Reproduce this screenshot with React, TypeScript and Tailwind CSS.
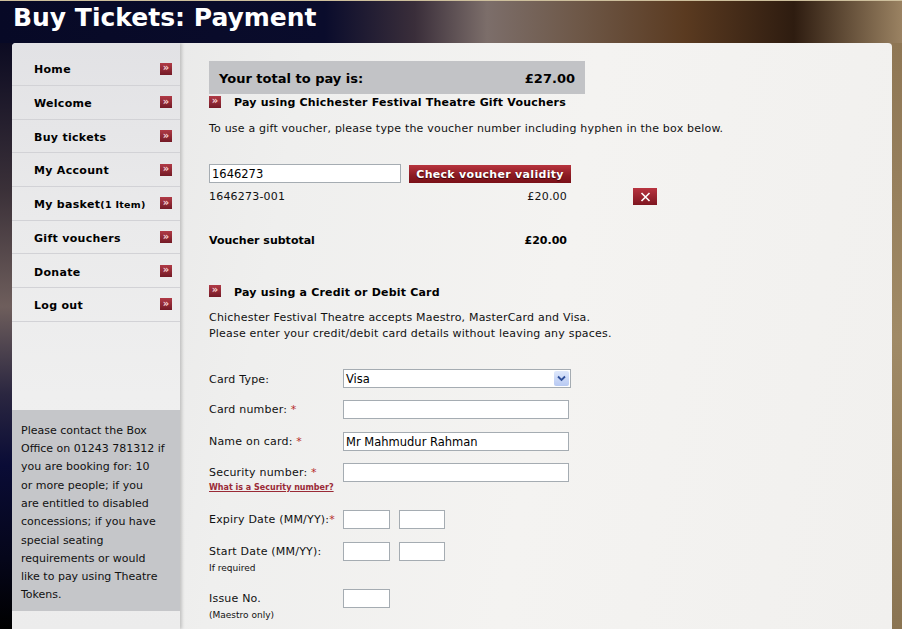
import React from "react";

const font = "font-['DejaVu_Sans',Verdana,sans-serif]";

function RedIcon() {
  return (
    <span className="flex h-[12px] w-[12px] shrink-0 items-center justify-center bg-[linear-gradient(#b03a46,#741a26)] pb-[1px] text-[10px] font-bold leading-none text-[#f6d2d4]">
      »
    </span>
  );
}

const navItems: { label: string; extra?: string }[] = [
  { label: "Home" },
  { label: "Welcome" },
  { label: "Buy tickets" },
  { label: "My Account" },
  { label: "My basket", extra: "(1 Item)" },
  { label: "Gift vouchers" },
  { label: "Donate" },
  { label: "Log out" },
];

const infoLines = [
  "Please contact the Box",
  "Office on 01243 781312 if",
  "you are booking for: 10",
  "or more people; if you",
  "are entitled to disabled",
  "concessions; if you have",
  "special seating",
  "requirements or would",
  "like to pay using Theatre",
  "Tokens.",
];

function TextInput({ w, value }: { w: string; value?: string }) {
  return (
    <div
      className={`${w} flex h-[19px] items-center border border-[#a5acb2] bg-white pl-[2px] pt-[3px] text-[11.5px] tracking-normal text-black`}
    >
      {value}
    </div>
  );
}

function Star() {
  return <span className="text-[#b52a2a]">*</span>;
}

export default function App() {
  return (
    <div
      className={`${font} flex h-[629px] w-[902px] flex-col overflow-hidden bg-[linear-gradient(90deg,#070926_0%,#0a0c2c_36%,#3a2e3a_46%,#7c6e6a_54%,#6e5848_64%,#5a3a20_76%,#2e1c10_88%,#9a8262_100%)]`}
    >
      {/* Header */}
      <div className="h-[43px] shrink-0 border-t border-[#cdbf9c] pl-[13px]">
        <h1 className="text-[25px] font-bold leading-[33px] text-white">Buy Tickets: Payment</h1>
      </div>

      <div className="flex min-h-0 flex-1">
        {/* left gutter */}
        <div className="w-[12px] shrink-0 bg-[linear-gradient(180deg,#0c0b22_0%,#3a3038_25%,#6e5e5c_45%,#2a2640_60%,#0a0c36_72%,#05061a_88%,#000000_100%)]" />

        {/* Panel */}
        <div className="flex w-[880px] shrink-0 overflow-hidden rounded-t-[4px] bg-[linear-gradient(100deg,#e4e4e4_0%,#efefee_30%,#f4f3f1_60%,#f1f0ee_100%)]">
          {/* Sidebar */}
          <div className="relative z-10 flex w-[168px] shrink-0 flex-col bg-[linear-gradient(180deg,#e2e2e5_0%,#eaeaeb_30%,#efefef_60%,#ececec_100%)] shadow-[2px_0_3px_rgba(0,0,0,0.18)]">
            <nav className="pt-[9.3px]">
              {navItems.map((item) => (
                <div
                  key={item.label}
                  className="flex h-[33.7px] items-center justify-between border-b border-[#d2d2d6] pl-[22px] pr-[8px] pt-[4px]"
                >
                  <span className="text-[11px] font-bold tracking-[0.3px] text-black">
                    {item.label}
                    {item.extra && <span className="text-[9.5px] tracking-[0.3px]">{item.extra}</span>}
                  </span>
                  <span className="-mt-[4px]">
                    <RedIcon />
                  </span>
                </div>
              ))}
            </nav>
            <div className="mt-[88px] h-[201px] bg-[#c5c6c9] pl-[9px] pt-[12px] text-[11px] leading-[18.3px] text-[#111]">
              {infoLines.map((l) => (
                <div key={l}>{l}</div>
              ))}
            </div>
          </div>

          {/* Main */}
          <div className="flex flex-1 flex-col pl-[29px] text-[11px] tracking-[0.2px] text-[#111]">
            {/* Total */}
            <div className="mt-[18px] flex h-[34px] w-[376px] items-center justify-between bg-[#c2c3c6] pl-[10px] pr-[10px] pt-[2px] text-[13px] font-bold tracking-normal text-black">
              <span>Your total to pay is:</span>
              <span>£27.00</span>
            </div>

            {/* voucher heading */}
            <div className="mt-[2px] flex h-[14px] items-center gap-[13px]">
              <span className="-mt-[3px]">
                <RedIcon />
              </span>
              <span className="text-[11px] font-bold text-black">
                Pay using Chichester Festival Theatre Gift Vouchers
              </span>
            </div>

            <p className="mt-[11px] leading-[16px]">
              To use a gift voucher, please type the voucher number including hyphen in the box below.
            </p>

            <div className="mt-[27px] flex items-center gap-[8px]">
              <TextInput w="w-[192px]" value="1646273" />
              <button className="flex h-[18px] w-[162px] items-center justify-center bg-[linear-gradient(#b8343e,#8a1a22_60%,#7a1018)] pt-[3px] text-[11px] font-bold tracking-[0.3px] text-white [text-shadow:0_1px_1px_#3a0006]">
                Check voucher validity
              </button>
            </div>

            <div className="mt-[5px] flex items-start">
              <div className="mt-[1px] flex w-[358px] justify-between leading-[16px]">
                <span>1646273-001</span>
                <span>£20.00</span>
              </div>
              <button className="ml-[66px] flex h-[17px] w-[24px] items-center justify-center bg-[linear-gradient(#b83440,#7e1620)]">
                <svg width="11" height="10" viewBox="0 0 11 10">
                  <path d="M1.5 1 L9.5 9 M9.5 1 L1.5 9" stroke="#fff" strokeWidth="1.6" />
                </svg>
              </button>
            </div>

            <div className="mt-[28px] flex w-[358px] justify-between font-bold leading-[16px] tracking-normal text-black">
              <span>Voucher subtotal</span>
              <span>£20.00</span>
            </div>

            {/* Card heading */}
            <div className="mt-[37px] flex h-[14px] items-center gap-[13px]">
              <span className="-mt-[5px]">
                <RedIcon />
              </span>
              <span className="text-[11px] font-bold text-black">Pay using a Credit or Debit Card</span>
            </div>

            <p className="mt-[10px] leading-[16px]">
              Chichester Festival Theatre accepts Maestro, MasterCard and Visa.
              <br />
              Please enter your credit/debit card details without leaving any spaces.
            </p>

            {/* Form */}
            <div className="mt-[27px] flex flex-col">
              <div className="flex h-[31px]">
                <div className="w-[134px] pt-[2px] leading-[18px]">Card Type:</div>
                <div className="flex h-[19px] w-[228px] items-center justify-between border border-[#a5acb2] bg-white pl-[2px] pr-[1px] text-[11.5px] tracking-normal text-black">
                  <span className="pt-[3px]">Visa</span>
                  <span className="flex h-[15px] w-[15px] items-center justify-center rounded-[2px] bg-[linear-gradient(#dfe8fb,#b7c9f3)]">
                    <svg width="9" height="7" viewBox="0 0 9 7">
                      <path d="M1 1.5 L4.5 5 L8 1.5" fill="none" stroke="#30509a" strokeWidth="1.8" />
                    </svg>
                  </span>
                </div>
              </div>
              <div className="flex h-[32px]">
                <div className="w-[134px] pt-[1px] leading-[18px]">
                  Card number: <Star />
                </div>
                <TextInput w="w-[226px]" />
              </div>
              <div className="flex h-[31px]">
                <div className="w-[134px] pt-[1px] leading-[18px]">
                  Name on card: <Star />
                </div>
                <TextInput w="w-[226px]" value="Mr Mahmudur Rahman" />
              </div>
              <div className="flex h-[47px]">
                <div className="w-[134px] pt-[1px]">
                  <div className="leading-[18px]">
                    Security number: <Star />
                  </div>
                  <div className="text-[8px] font-bold leading-[12px] tracking-normal text-[#9a2a36] underline">
                    What is a Security number?
                  </div>
                </div>
                <TextInput w="w-[226px]" />
              </div>
              <div className="flex h-[32px]">
                <div className="w-[134px] pt-[1px] leading-[18px]">
                  Expiry Date (MM/YY):<Star />
                </div>
                <div className="flex gap-[9px]">
                  <TextInput w="w-[47px]" />
                  <TextInput w="w-[46px]" />
                </div>
              </div>
              <div className="flex h-[47px]">
                <div className="w-[134px] pt-[1px]">
                  <div className="leading-[18px]">Start Date (MM/YY):</div>
                  <div className="text-[9px] leading-[14px] tracking-normal">If required</div>
                </div>
                <div className="flex gap-[9px]">
                  <TextInput w="w-[47px]" />
                  <TextInput w="w-[46px]" />
                </div>
              </div>
              <div className="flex h-[40px]">
                <div className="w-[134px] pt-[1px]">
                  <div className="leading-[18px]">Issue No.</div>
                  <div className="text-[9px] leading-[14px] tracking-normal">(Maestro only)</div>
                </div>
                <TextInput w="w-[47px]" />
              </div>
            </div>
          </div>
        </div>

        {/* right gutter */}
        <div className="flex-1 bg-[linear-gradient(180deg,#8e7654,#a08a66_50%,#8a7452)]" />
      </div>
    </div>
  );
}
